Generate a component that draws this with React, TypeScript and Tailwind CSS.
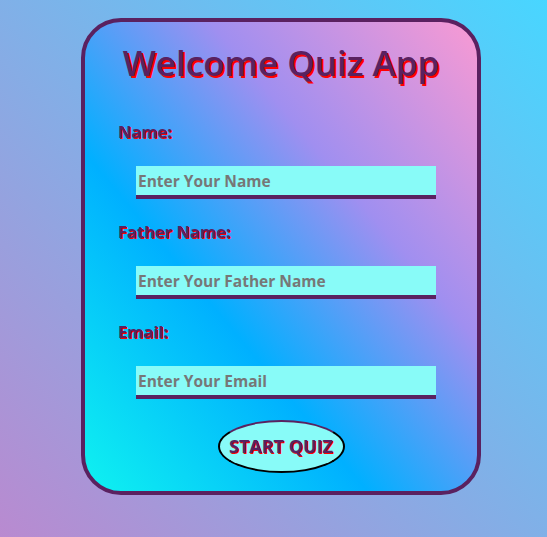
import React from 'react';

const fields = [
  { label: 'Name:', placeholder: 'Enter Your Name', type: 'text' },
  { label: 'Father Name:', placeholder: 'Enter Your Father Name', type: 'text' },
  { label: 'Email:', placeholder: 'Enter Your Email', type: 'email' },
];

const App: React.FC = () => {
  return (
    <div className="min-h-screen w-full bg-[linear-gradient(to_top_right,#b98ad0,#48d6ff)] pt-[18px] font-['Open_Sans',sans-serif]">
      <div className="ml-[81px] w-[400px] rounded-[40px] border-4 border-[#5a2160] bg-[linear-gradient(to_top_right,#0ff2f0_0%,#00b0ff_36%,#a08ff0_66%,#f99ad3_100%)] pb-[18px]">
        {/* Title */}
        <h1 className="mt-[17px] text-center text-[35px] leading-[48px] font-semibold text-[#5a2160] [text-shadow:2px_2px_0_#ff0000]">
          Welcome Quiz App
        </h1>

        <form className="mt-[33px] flex flex-col gap-[21px]" onSubmit={(e) => e.preventDefault()}>
          {fields.map((f) => (
            <div key={f.label} className="flex flex-col">
              <label className="ml-[33px] text-[16.5px] leading-[24px] font-bold text-[#5a2160] [text-shadow:1px_1px_0_#ff0000]">
                {f.label}
              </label>
              <input
                type={f.type}
                placeholder={f.placeholder}
                className="mt-[22px] ml-[51px] h-[33px] w-[300px] border-b-4 border-[#5a2160] bg-[#88fbf8] px-[2px] text-[15.5px] font-bold text-[#333] outline-none placeholder:font-bold placeholder:text-[#777]"
              />
            </div>
          ))}
          <div className="flex justify-center">
            <button
              type="submit"
              className="h-[53px] w-[127px] rounded-[50%] border-2 border-black border-t-[#5a2160] bg-[#88fbf8] text-[18px] font-bold text-[#5a2160] [text-shadow:1px_1px_0_#ff0000]"
            >
              START QUIZ
            </button>
          </div>
        </form>
      </div>
    </div>
  );
};

export default App;
